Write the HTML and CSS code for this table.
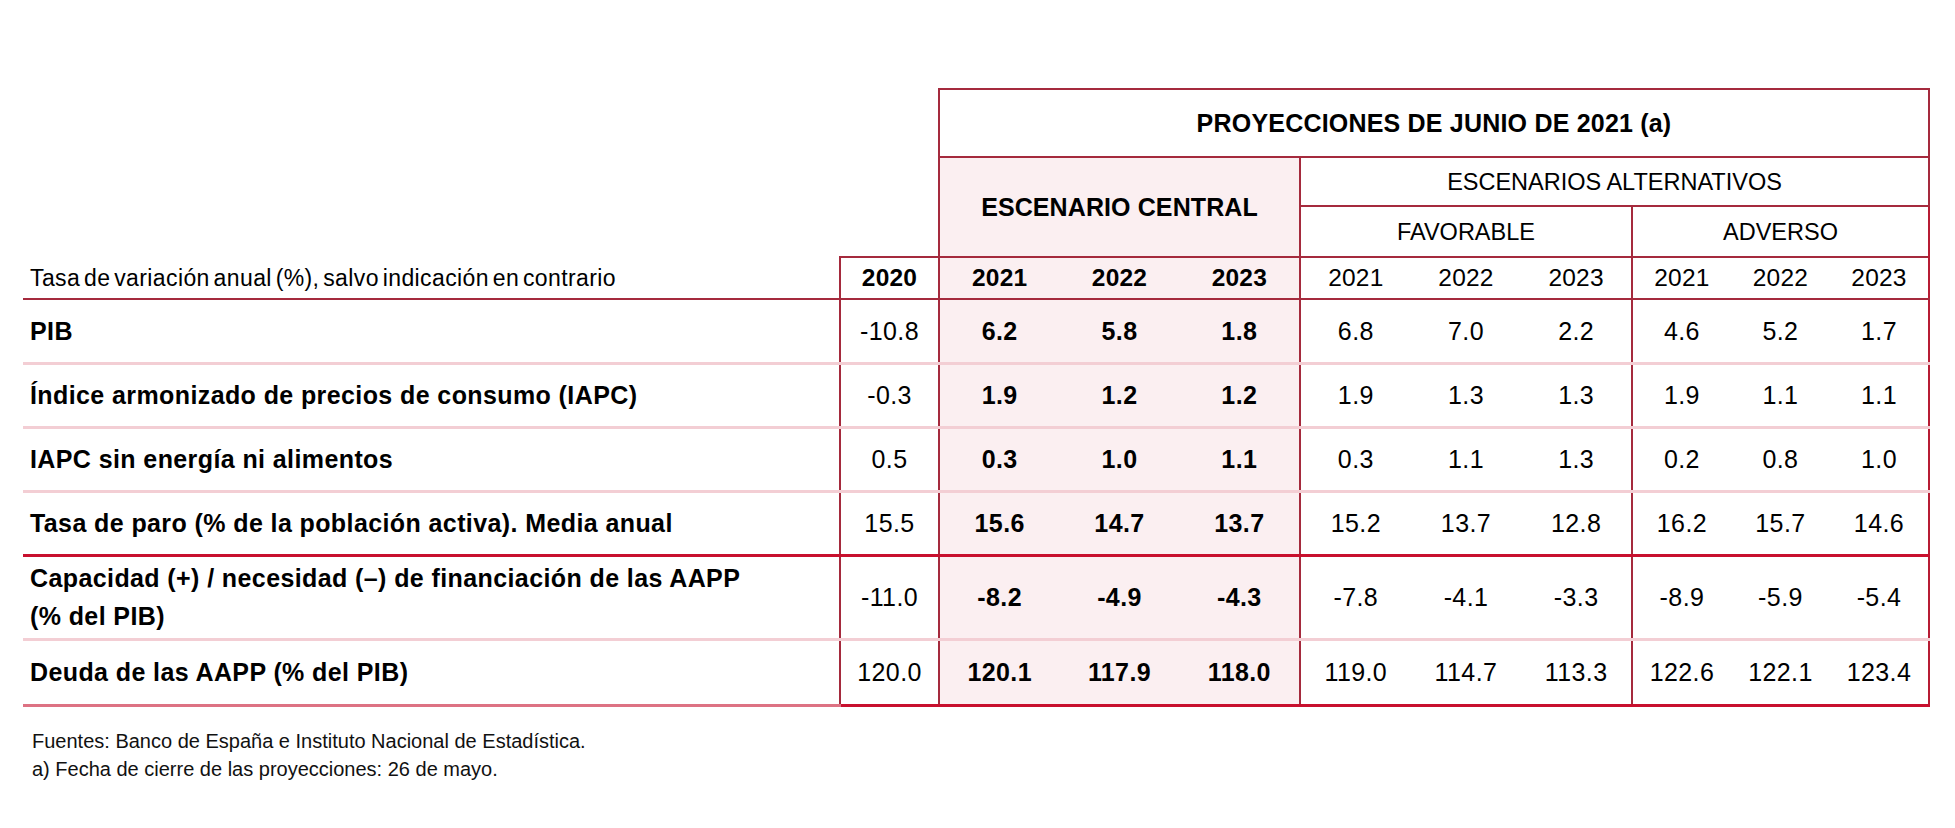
FILE: index.html
```html
<!DOCTYPE html>
<html lang="es">
<head>
<meta charset="utf-8">
<title>Proyecciones de junio de 2021</title>
<link rel="stylesheet" href="styles.css">
</head>
<body>
<div class="page">
  <table class="proj">
    <colgroup>
      <col class="c-label">
      <col class="c-2020">
      <col class="c-cen"><col class="c-cen"><col class="c-cen">
      <col class="c-fav"><col class="c-fav"><col class="c-fav">
      <col class="c-adv"><col class="c-adv"><col class="c-adv">
    </colgroup>
    <thead>
      <tr class="h-title">
        <td class="blank" colspan="2" rowspan="3"></td>
        <th class="title" colspan="9">PROYECCIONES DE JUNIO DE 2021 (a)</th>
      </tr>
      <tr class="h-alt">
        <th class="central" colspan="3" rowspan="2">ESCENARIO CENTRAL</th>
        <th class="alt" colspan="6">ESCENARIOS ALTERNATIVOS</th>
      </tr>
      <tr class="h-sub">
        <th class="sub fav-end" colspan="3">FAVORABLE</th>
        <th class="sub adv-end" colspan="3">ADVERSO</th>
      </tr>
      <tr class="h-years">
        <th class="unit">Tasa de variación anual (%), salvo indicación en contrario</th>
        <th class="yr y2020 strong">2020</th>
        <th class="yr cen strong">2021</th>
        <th class="yr cen strong">2022</th>
        <th class="yr cen cen-end strong">2023</th>
        <th class="yr">2021</th>
        <th class="yr">2022</th>
        <th class="yr fav-end">2023</th>
        <th class="yr">2021</th>
        <th class="yr">2022</th>
        <th class="yr adv-end">2023</th>
      </tr>
    </thead>
    <tbody>
      <tr class="r-std sep-pink">
        <td class="lab">PIB</td>
        <td class="y2020">-10.8</td>
        <td class="cen strong">6.2</td><td class="cen strong">5.8</td><td class="cen cen-end strong">1.8</td>
        <td>6.8</td><td>7.0</td><td class="fav-end">2.2</td>
        <td>4.6</td><td>5.2</td><td class="adv-end">1.7</td>
      </tr>
      <tr class="r-std sep-pink">
        <td class="lab">Índice armonizado de precios de consumo (IAPC)</td>
        <td class="y2020">-0.3</td>
        <td class="cen strong">1.9</td><td class="cen strong">1.2</td><td class="cen cen-end strong">1.2</td>
        <td>1.9</td><td>1.3</td><td class="fav-end">1.3</td>
        <td>1.9</td><td>1.1</td><td class="adv-end">1.1</td>
      </tr>
      <tr class="r-std sep-pink">
        <td class="lab">IAPC sin energía ni alimentos</td>
        <td class="y2020">0.5</td>
        <td class="cen strong">0.3</td><td class="cen strong">1.0</td><td class="cen cen-end strong">1.1</td>
        <td>0.3</td><td>1.1</td><td class="fav-end">1.3</td>
        <td>0.2</td><td>0.8</td><td class="adv-end">1.0</td>
      </tr>
      <tr class="r-std sep-red">
        <td class="lab">Tasa de paro (% de la población activa). Media anual</td>
        <td class="y2020">15.5</td>
        <td class="cen strong">15.6</td><td class="cen strong">14.7</td><td class="cen cen-end strong">13.7</td>
        <td>15.2</td><td>13.7</td><td class="fav-end">12.8</td>
        <td>16.2</td><td>15.7</td><td class="adv-end">14.6</td>
      </tr>
      <tr class="r-tall sep-pink">
        <td class="lab">Capacidad (+) / necesidad (–) de financiación de las AAPP<br>(% del PIB)</td>
        <td class="y2020">-11.0</td>
        <td class="cen strong">-8.2</td><td class="cen strong">-4.9</td><td class="cen cen-end strong">-4.3</td>
        <td>-7.8</td><td>-4.1</td><td class="fav-end">-3.3</td>
        <td>-8.9</td><td>-5.9</td><td class="adv-end">-5.4</td>
      </tr>
      <tr class="r-last sep-end">
        <td class="lab">Deuda de las AAPP (% del PIB)</td>
        <td class="y2020">120.0</td>
        <td class="cen strong">120.1</td><td class="cen strong">117.9</td><td class="cen cen-end strong">118.0</td>
        <td>119.0</td><td>114.7</td><td class="fav-end">113.3</td>
        <td>122.6</td><td>122.1</td><td class="adv-end">123.4</td>
      </tr>
    </tbody>
  </table>
  <div class="notes">
    <p>Fuentes: Banco de España e Instituto Nacional de Estadística.</p>
    <p>a) Fecha de cierre de las proyecciones: 26 de mayo.</p>
  </div>
</div>
</body>
</html>
```

FILE: styles.css
```css
* { box-sizing: border-box; }

html, body {
  margin: 0;
  background: #ffffff;
}

body {
  font-family: "Liberation Sans", Arial, Helvetica, sans-serif;
  color: #000000;
}

.page {
  padding: 88px 0 0 23px;
}

.proj {
  border-collapse: collapse;
  table-layout: fixed;
  width: 1906px;
}

.c-label { width: 817px; }
.c-2020 { width: 99px; }
.c-cen { width: 120.33px; }
.c-fav { width: 110.67px; }
.c-adv { width: 99px; }

.proj th,
.proj td {
  padding: 0;
  vertical-align: middle;
  text-align: center;
  font-weight: normal;
  font-size: 25px;
  letter-spacing: 0.4px;
  line-height: 30px;
}

/* header rows */
.h-title { height: 68px; }
.h-alt { height: 49px; }
.h-sub { height: 51px; }
.h-years { height: 42px; }

.proj .title {
  font-weight: bold;
  letter-spacing: 0.2px;
  border: 2px solid #a52a3d;
}

.proj .central {
  font-weight: bold;
  letter-spacing: 0.1px;
  background: #fbeff1;
  border-left: 2px solid #a52a3d;
  border-right: 2px solid #a52a3d;
}

.proj .alt {
  font-size: 23.5px;
  letter-spacing: 0;
  border-bottom: 2px solid #a52a3d;
  border-right: 2px solid #a52a3d;
}

.proj .sub {
  font-size: 23.5px;
  letter-spacing: 0;
}

.proj .h-years th {
  border-bottom: 2px solid #a52a3d;
  border-top: 2px solid #a52a3d;
  font-size: 24.5px;
  letter-spacing: 0.2px;
}

.proj .h-years .unit {
  border-top: none;
  text-align: left;
  padding-left: 7px;
  font-size: 23px;
  letter-spacing: 0.4px;
  word-spacing: -3px;
}

.proj .strong { font-weight: bold; }

.proj .y2020 {
  border-left: 2px solid #a52a3d;
  border-right: 2px solid #a52a3d;
}

.proj .cen { background: #fbeff1; }

.proj .cen-end { border-right: 2px solid #a52a3d; }
.proj .fav-end { border-right: 2px solid #a52a3d; }
.proj .adv-end { border-right: 2px solid #b71c34; }

/* body rows */
.r-std { height: 64px; }
.r-tall { height: 84px; }
.r-last { height: 66px; }

.proj td.lab {
  text-align: left;
  padding-left: 7px;
  font-weight: bold;
  line-height: 38px;
}

.proj .sep-pink td { border-bottom: 3px solid #f3ced4; }
.proj .sep-red td { border-bottom: 3px solid #c8102e; }
.proj .sep-end td { border-bottom: 3px solid #c8102e; }
.proj .sep-end td.lab { border-bottom-color: #dd7283; }

/* notes */
.notes {
  margin-top: 20px;
  padding-left: 9px;
}

.notes p {
  margin: 0;
  font-size: 20px;
  line-height: 28px;
  color: #111111;
}
```
